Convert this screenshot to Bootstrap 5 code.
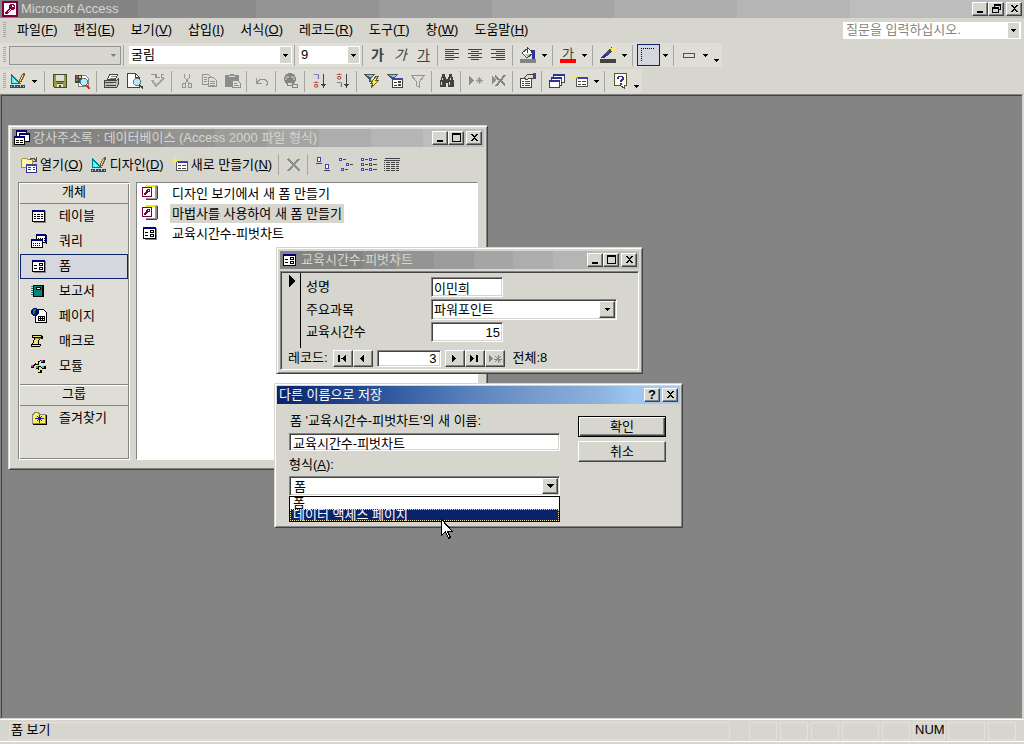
<!DOCTYPE html>
<html lang="ko">
<head>
<meta charset="utf-8">
<meta name="viewport" content="width=device-width, initial-scale=1">
<title>Microsoft Access</title>
<link rel="stylesheet" href="https://cdn.jsdelivr.net/npm/bootstrap@5.3.0/dist/css/bootstrap.min.css">
<style>
:root{--face:#d6d6ce;--lite:#deded6;--gray:#848484;--dark:#424242;--navy:#08246b}
body{font-family:"Liberation Sans","Noto Sans CJK KR",sans-serif;font-size:13px;line-height:16px;color:#000;background:var(--face)}
button,input,select{font:inherit;color:inherit;line-height:16px;border-radius:0}
svg{display:block;flex:none;shape-rendering:crispEdges}
.caption{height:18px;padding:0 2px;gap:3px;color:var(--face);background:linear-gradient(90deg,#848484 0 23%,#8c8c8c 0 32%,#949494 0 43%,#9c9c9c 0 54%,#a5a5a5 0 65%,#adadad 0 76%,#b5b5b5 0 87%,#bdbdbd 0);white-space:nowrap}
.app-caption{background:linear-gradient(90deg,#848484 0 138px,#8c8c8c 0 25%,#949494 0 37%,#9c9c9c 0 48%,#a5a5a5 0 60%,#adadad 0 72%,#b5b5b5 0 83%,#bdbdbd 0)}
.blue-caption{color:#fff;background:linear-gradient(90deg,#08246b 0,#21458c 18%,#3961a5 32%,#5a82bd 48%,#7b9ece 66%,#8cb2de 80%,#9cc7ef 88%,#a5cbf7)}
.bevel{color:#000;background:var(--face);border:1px solid;border-color:#fff var(--dark) var(--dark) #fff;box-shadow:inset -1px -1px var(--gray);padding:0}
.ctl{width:16px;height:14px;display:flex;align-items:center;justify-content:center}
.ctls .ctl:last-child{margin-left:2px}
.sunken{background:#fff;border:1px solid;border-color:var(--gray) #fff #fff var(--gray);box-shadow:inset 1px 1px var(--dark),inset -1px -1px var(--face)}
.win{position:absolute;background:var(--face);border:1px solid;border-color:var(--face) var(--dark) var(--dark) var(--face);box-shadow:inset 1px 1px #fff,inset -1px -1px var(--gray)}
.menubar{height:24px}
.menubar nav{padding-left:3px}
.menubar a{color:#000;text-decoration:none;padding:0 8px;white-space:nowrap}
.grip{width:3px;height:16px;margin:0 3px 0 3px;background:repeating-linear-gradient(180deg,#a5a5a5 0 1px,transparent 1px 2px)}
.toolband{height:24px;background:var(--lite);border-radius:0 2px 2px 0;width:max-content;margin-top:1px}
.toolband + .toolband{margin-top:2px}
.tb{width:23px;height:22px;border:0;background:none;padding:0 3px 0 4px;display:flex;align-items:center}
.drop{width:11px;height:22px;border:0;background:none;padding:0;display:flex;align-items:center;justify-content:center}
.sep{width:1px;height:21px;background:#a5a5a5;margin:0 3px 0 2px}
.tb.glyph{font-size:14px;color:var(--dark);padding:0;justify-content:center}
.tb.pressed{border:1px solid var(--navy);background:#d6d6de;padding:0 0 0 2px;margin-left:1px}
.combo{position:relative}
.combo select{appearance:none;width:100%;height:100%;border:0;background:#fff;padding:0 2px;outline:0}
.combo .arrow{position:absolute;top:1px;right:1px;bottom:1px;width:11px;background:var(--face);display:flex;align-items:center;justify-content:center;pointer-events:none}
.combo.off{width:112px;height:19px;border:1px solid #949494}
.combo.off select{background:var(--face);opacity:1}
.combo.face{width:163px;height:18px;margin-left:2px}
.combo.size{width:61px;height:18px;margin-left:1px}
.combo.big{padding:2px 1px 1px 2px}
.combo.big .arrow{width:16px;background:var(--face)}
.ask{width:178px;height:17px;background:#fff;margin-right:3px}
.ask input{border:0;background:#fff;width:165px;padding:0 3px;outline:0}
.ask input::placeholder{color:var(--gray);opacity:1}
.ask button{border:0;background:var(--face);width:11px;height:15px;padding:0 0 0 3px}
.mdi{background:var(--gray);border:1px solid var(--gray);border-right:1px solid var(--face);border-bottom:1px solid var(--face);box-shadow:inset 1px 1px var(--dark);margin:1px 1px 0 0;min-height:500px}
.dbwin{left:7px;top:30px;width:480px;padding:3px 3px 9px}
.formwin{left:275px;top:152px;width:367px;padding:3px 3px 3px}
.savewin{left:273px;top:288px;width:409px;height:145px;padding:2px}
.pointer{left:440px;top:424px;position:absolute;z-index:3}
.dbtools{height:35px;padding-left:9px}
.dbtools .txtbtn{border:0;background:none;padding:0 8px 0 0;display:flex;align-items:center;gap:3px;white-space:nowrap}
.panes{padding:0 6px;gap:6px}
.side{width:112px;background:var(--lite);border:1px solid;border-color:var(--gray) #fff #fff var(--gray);box-shadow:inset 1px 1px #fff,inset -1px -1px var(--gray);padding:1px;height:278px}
.side h2{font-size:13px;line-height:16px;font-weight:400;text-align:center;margin:0;height:20px;border-bottom:1px solid var(--gray)}
.side h2.second{border-top:1px solid var(--gray);box-shadow:inset 0 1px #fff;margin-top:5px;height:22px;padding-top:1px}
.side button{display:flex;align-items:center;width:100%;height:25px;border:1px solid transparent;background:none;padding:0 0 2px 10px;gap:12px}
.side button.current{border-color:var(--navy);background:#d6d6de}
.files{background:#fff;border:1px solid;border-color:var(--gray) #fff #fff var(--gray);padding:0 0 0 5px}
.files li{height:20px;display:flex;align-items:center;gap:12px;white-space:nowrap}
.files a{color:#000;text-decoration:none;padding:2px 2px 1px}
.files .chosen{background:var(--face)}
.formbody{border:1px solid;border-color:var(--gray) #fff #fff var(--gray);box-shadow:inset 1px 1px var(--dark);margin-top:2px;padding:1px}
.selector{width:19px;border-right:1px solid #000;padding:2px 0 0 7px}
.fields{padding:4px 0 6px 5px;gap:2px}
.fieldrow{display:grid;grid-template-columns:125px 1fr;align-items:center}
.fieldrow input{height:20px;width:72px;padding:0 2px}
.fieldrow .combo{width:186px;height:21px}
.fieldrow select{padding:0}
.navrow{height:20px;padding-left:6px;white-space:nowrap}
.navrow label{margin-right:5px}
.navrow .bevel{width:20px;height:17px;display:flex;align-items:center;justify-content:center}
.navrow input{width:64px;height:17px;padding:0 3px;margin:0 4px}
.savegrid{display:grid;grid-template-columns:271px 88px;column-gap:18px;padding:9px 12px 0}
.savegrid label{padding-left:1px}
.savegrid input{height:18px;padding:0 3px;margin-top:4px}
.savegrid label + .combo{height:20px;margin-top:3px}
.savegrid .kind{padding:0;margin-top:6px}
.savegrid .ok{height:21px}
.savegrid .oks{padding-top:3px}
.savegrid .default{outline:1px solid #000;outline-offset:-1px;border-color:#000;box-shadow:inset 1px 1px #fff,inset -1px -1px var(--dark),inset -2px -2px var(--gray)}
.picklist{position:absolute;left:-1px;right:-1px;top:19px;border:1px solid #000;background:#fff;z-index:2}
.picklist li{height:12px;line-height:12px;padding:0 3px;overflow:hidden}
.picklist .hot{background:var(--navy);color:#fff;outline:1px dotted #f7dfa5;outline-offset:-1px}
.statusbar{border-top:1px solid #fff;border-bottom:1px solid #fff;padding:2px 8px 1px 9px;gap:3px;margin-bottom:2px}
.cell{height:18px;border:1px solid #e7dede;padding:0 1px;white-space:nowrap;width:28px}
.cell.message{width:auto;line-height:14px}
.cell.wide{width:37px}
.cell.num{width:32px;line-height:14px}
</style>
</head>
<body>
<svg width="0" height="0" class="position-absolute" aria-hidden="true">
<defs>
<symbol id="down" viewBox="0 0 5 3"><path d="M0 0h5v1h-1v1h-1v1h-1v-1h-1v-1h-1z"/></symbol>
<symbol id="min" viewBox="0 0 11 10"><path d="M2 7h6v2H2z"/></symbol>
<symbol id="max" viewBox="0 0 11 10"><path d="M1 0h9v9H1zM2 2v6h7V2z" fill-rule="evenodd"/></symbol>
<symbol id="close" viewBox="0 0 11 10"><path d="M2 1h2v1h1v1h1v-1h1v-1h2v1h-1v1h-1v1h-1v1h1v1h1v1h1v1h-2v-1h-1v-1h-1v1h-1v1h-2v-1h1v-1h1v-1h1v-1h-1v-1h-1v-1h-1z"/></symbol>
<symbol id="restore" viewBox="0 0 11 10"><path d="M3 0h7v6H8v3H1V3h2zM4 2v1h4v2h1V2zM2 5v3h5V5z" fill-rule="evenodd"/></symbol>
<symbol id="access" viewBox="0 0 16 16"><path fill="#7b0039" d="M0 0h16v16H0z"/><path fill="#fff" d="M2 2h12v12H2z"/><path fill="#840042" d="M8 3h4v1h1v4h-1v1H9v1H8v1H7v1H6v1H3v-2h1v-1h1V9h1V8h1V4h1z"/><path fill="#fff" d="M10 4h1v1h1v1h-2zM8 8h1v1H8v1H7v1H6v-1h1V9h1z"/></symbol>
<symbol id="dsn" viewBox="0 0 16 16"><path d="M1 1h1v1h1v1h1v1h1v1h1v1h1v1h1v1h1v1h1v1h1v1H1z" fill="#007b84"/><path d="M2 4l6 6H2z" fill="#4ff"/><path d="M4 7v2h2z" fill="#fff"/><path d="M0 12h15v3H0z" fill="#394a5a"/><path d="M1 13h1v1H1zM4 12h1v2H4zM7 13h1v1H7zM10 12h1v2h-1zM13 13h1v1h-1z" fill="#a5dede"/><path d="M13 0h2v3h-1v2h-1v2h-1v2h-2v1H8V8h1V6h1V4h1V2h1V1h1z" fill="#7b5a39"/><path d="M12 2h1v2h-1v2h-1v2h-1V6h1V4h1z" fill="#ffe74a"/></symbol>
<symbol id="save" viewBox="0 0 16 16"><path d="M1 1h14v14H2v-1H1z" fill="#424a31"/><path d="M2 2h2v7h8V2h2v12h-3v-4H5v4H2z" fill="#949c42"/><path d="M4 2h8v6H4z" fill="#deded6"/><path d="M5 11h6v3H9v-2H7v2H5z" fill="#e7e7de"/></symbol>
<symbol id="seek" viewBox="0 0 16 16"><path d="M3.500 2.500h7l3 3v8h-10z" fill="#fff" stroke="#848484"/><path d="M0 2h7v8H0z" fill="#424242"/><path d="M1 3h2v2H1z" fill="#e33"/><path d="M4 3h2v2H4z" fill="#fc4"/><path d="M1 6h2v2H1z" fill="#4a4"/><path d="M4 6h2v2H4z" fill="#44d"/><circle cx="9" cy="9" r="3.500" fill="#aef" stroke="#427b84"/><path d="M11 12l4 4" stroke="#c33" stroke-width="2"/></symbol>
<symbol id="print" viewBox="0 0 16 16"><path d="M5.500 1.500h8l-2 5h-8z" fill="#fff" stroke="#424242"/><path d="M7 3.500h5M6 5.500h5" stroke="#848484"/><path d="M.500 7.500h12l2-2v6l-2 3H.500z" fill="#bdbdb5" stroke="#424242"/><path d="M1 9.500h11M2 12.500h10" stroke="#424242"/><path d="M9 10h2v1H9z" fill="#ee4"/></symbol>
<symbol id="preview" viewBox="0 0 16 16"><path d="M.500.500h8l4 4v10H.500z" fill="#fff" stroke="#424242"/><path d="M8.500.500v4h4" fill="none" stroke="#424242"/><circle cx="10" cy="9" r="3.500" fill="#bde7ef" stroke="#637b84"/><path d="M12 12l4 3" stroke="#424242" stroke-width="2"/></symbol>
<symbol id="check" viewBox="0 0 16 16"><path d="M1 1.500h4v3M6.500 1v3.500h3M14 1.500h-3v3h3" fill="none" stroke="#949494"/><path d="M2 7l4 6 8-8" fill="none" stroke="#a5a5a5" stroke-width="2"/></symbol>
<symbol id="cut" viewBox="0 0 16 16"><g fill="none" stroke="#949494"><path d="M5.500 1v3l4 6M10.500 1v3l-4 6"/><path d="M3.500 10.500h3v4h-3zM9.500 10.500h3v4h-3z"/></g></symbol>
<symbol id="copy" viewBox="0 0 16 16"><g fill="#deded6" stroke="#949494"><path d="M.500 1.500h6l3 3v7h-9z"/><path d="M6.500 4.500h5l3 3v6h-8z"/><path d="M2 4.500h3M2 6.500h3M2 8.500h3M8 8.500h5M8 10.500h5M8 12.500h5"/></g></symbol>
<symbol id="paste" viewBox="0 0 16 16"><path d="M0 2h5V1h4v1h5v12H0z" fill="#8c8c8c"/><path d="M4 3h6v1H4z" fill="#deded6"/><path d="M7.500 7.500h5l3 3v4h-8z" fill="#deded6" stroke="#8c8c8c"/><path d="M9 10.500h3M9 12.500h5" stroke="#949494"/></symbol>
<symbol id="undo" viewBox="0 0 16 16"><path d="M2.500 5v5h5M3 9.500l3-3h5l2 2v3l-1 1" fill="none" stroke="#949494"/></symbol>
<symbol id="web" viewBox="0 0 16 16"><circle cx="7" cy="6" r="6" fill="#848484"/><path d="M3 3h3v2H4v2H2V5h1zM8 3h3v1h1v3h-2V5H8z" fill="#adadad"/><path d="M4.500 9.500h5v3h-5zM9.500 11.500h5v3h-5z" fill="#deded6" stroke="#848484"/></symbol>
<symbol id="arrdown" viewBox="0 0 16 16"><path d="M11 1h1v10h2v1h-1v1h-1v2h-1v-2h-1v-1H9v-1h2z" fill="#424242"/></symbol>
<symbol id="funnel" viewBox="0 0 16 16"><path d="M0 1h11v1h-1v1H9v1H8v1H7v4H5V6H4V5H3V4H2V3H1V2H0z" fill="#4a5a63"/><path d="M3 2h6v1H8v1H5V3H3z" fill="#8cc6ce"/></symbol>
<symbol id="fsel" viewBox="0 0 16 16"><use href="#funnel"/><path d="M12 3h3l-3 4h3l-8 8 2-5H7z" fill="#ffef42" stroke="#635a21"/></symbol>
<symbol id="fform" viewBox="0 0 16 16"><use href="#funnel"/><path d="M5.500 5.500h10v9h-10z" fill="#fff" stroke="#424242"/><path d="M5 5h11v2H5z" fill="#4242a5"/><path d="M7 9.500h3M7 12.500h3" stroke="#424242"/><path d="M11.500 8.500h2v1h-2zM11.500 11.500h2v1h-2z" stroke="#424242"/></symbol>
<symbol id="fgray" viewBox="0 0 16 16"><path d="M1.500 2.500h13l-5 6v6l-3-2v-4z" fill="none" stroke="#949494"/></symbol>
<symbol id="find" viewBox="0 0 16 16"><path d="M3 1h3v3h1v2h2V4h1V1h3v3h1v3h1v7H9v-4H7v4H1V7h1V4h1z" fill="#424242"/><path d="M3 5h1v2H3zM11 5h1v2h-1zM2 9h1v3H2zM10 9h1v3h-1z" fill="#deded6"/></symbol>
<symbol id="newrec" viewBox="0 0 16 16"><path d="M1 3v9l5-4.500z" fill="#8c8c8c"/><path d="M11.500 4v7M8 7.500h7M9 5l5 5M14 5l-5 5" stroke="#949494"/></symbol>
<symbol id="delrec" viewBox="0 0 16 16"><path d="M1 3v8l4-4z" fill="#8c8c8c"/><path d="M4 3l10 9M14 2L5 13" stroke="#848484" stroke-width="2"/></symbol>
<symbol id="props" viewBox="0 0 16 16"><path d="M.500 5.500h11v9H.500z" fill="#fff" stroke="#424242"/><path d="M2 8.500h2M5 8.500h5M2 10.500h2M5 10.500h5M2 12.500h2M5 12.500h5" stroke="#424242"/><path d="M4 5l4-4h5v4H9l-2 2z" fill="#e7d6c6" stroke="#424242"/><path d="M13 0h3v6h-3z" fill="#4242a5"/></symbol>
<symbol id="dbw" viewBox="0 0 16 16"><g fill="#fff" stroke="#424242"><path d="M4.500 1.500h11v8h-11z"/><path d="M2.500 4.500h10v8h-10z"/><path d="M.500 7.500h10v7H.500z"/></g><path d="M4 1h12v2H4zM2 4h11v2H2zM0 7h11v2H0z" fill="#31319c"/></symbol>
<symbol id="dbi" viewBox="0 0 16 16"><g fill="#fff" stroke="#000"><path d="M2.500.500h10v8h-10z"/><path d="M5.500 3.500h10v8h-10z"/><path d="M.500 6.500h10v8H.500z"/></g><path d="M2 0h11v2H2zM5 3h11v2H5zM0 6h11v2H0z" fill="#00007b"/><path d="M2 10.500h3M6 10.500h3M2 12.500h3M6 12.500h3" stroke="#000"/></symbol>
<symbol id="newobj" viewBox="0 0 16 16"><path d="M4.500 4.500h11v9h-11z" fill="#fff" stroke="#525252"/><path d="M4 4h12v2H4z" fill="#4242a5"/><path d="M6 8.500h3M10 8.500h4M6 11.500h3M10 11.500h4" stroke="#424242"/><path d="M3.500 0v8M0 3.500h8M1 1l6 6M7 0L0 7" stroke="#f7ef52"/></symbol>
<symbol id="help" viewBox="0 0 16 16"><path d="M2.500.500h12v12h-2v3l-4-3h-6z" fill="#ffffce" stroke="#525252"/><path d="M6 3h5v1h1v3h-1v1h-1v1H8V7h1V6h1V4H7v2H5V4h1zM8 10h2v2H8z" fill="#31319c"/></symbol>
<symbol id="al" viewBox="0 0 16 16"><path d="M0 2.500h14M0 4.500h9M0 6.500h14M0 8.500h9M0 10.500h14M0 12.500h9" stroke="#424242"/></symbol>
<symbol id="ac" viewBox="0 0 16 16"><path d="M0 2.500h14M3 4.500h8M0 6.500h14M3 8.500h8M0 10.500h14M3 12.500h8" stroke="#424242"/></symbol>
<symbol id="ar" viewBox="0 0 16 16"><path d="M0 2.500h14M5 4.500h9M0 6.500h14M5 8.500h9M0 10.500h14M5 12.500h9" stroke="#424242"/></symbol>
<symbol id="fill" viewBox="0 0 16 16"><path d="M0 12h16v4H0z" fill="#848484"/><path d="M2 6l6-5 5 5-6 5z" fill="#fff" stroke="#424242"/><path d="M4 7h7l-4 3z" fill="#9cc"/><path d="M7.500 0v6M11 3h3v8h-2V6z" stroke="#31319c" fill="#31319c"/></symbol>
<symbol id="brush" viewBox="0 0 16 16"><path d="M0 12h16v4H0z" fill="#424242"/><path d="M0 11l5-5h3v2l-4 3z" fill="#31319c"/><path d="M6 8l7-7" stroke="#424a7b" stroke-width="3"/><path d="M11 3l4-3" stroke="#ffef42" stroke-width="3"/></symbol>
<symbol id="tbl" viewBox="0 0 16 16"><path d="M3 3h12v12H3z" fill="#848484"/><path d="M1.500 2.500h12v11h-12z" fill="#fff" stroke="#000"/><path d="M1 2h13v2H1z" fill="#00007b"/><path d="M3 6.500h2M6 6.500h3M10 6.500h2M3 8.500h2M6 8.500h3M10 8.500h2M3 10.500h2M6 10.500h3M10 10.500h2" stroke="#000"/></symbol>
<symbol id="qry" viewBox="0 0 16 16"><path d="M5.500 1.500h9v8h-9z" fill="#fff" stroke="#000"/><path d="M5 1h10v2H5zM15 2h1v9h-1z" fill="#00007b"/><path d="M7 5.500h7M7 7.500h7" stroke="#000" stroke-dasharray="1"/><path d="M.500 6.500h11v8H.500z" fill="#fff" stroke="#000"/><path d="M0 6h12v2H0z" fill="#00007b"/><path d="M2 10.500h8M2 12.500h8" stroke="#000" stroke-dasharray="1"/></symbol>
<symbol id="frm" viewBox="0 0 16 16"><path d="M3 3h12v12H3z" fill="#848484"/><path d="M1.500 2.500h12v11h-12z" fill="#fff" stroke="#000"/><path d="M1 2h13v2H1z" fill="#00007b"/><path d="M3 7.500h3M3 10.500h3" stroke="#000"/><path d="M8.500 5.500h3v2h-3zM8.500 9.500h3v2h-3z" fill="none" stroke="#000"/></symbol>
<symbol id="rpt" viewBox="0 0 16 16"><path d="M2 2h11v12H2z" fill="#000"/><path d="M3 3h8v10H3z" fill="#00847b"/><path d="M5 4h5v3H5z" fill="#000"/><path d="M6 5h3v1H6z" fill="#fff"/><path d="M0 3.500h2M0 5.500h2M0 7.500h2M0 9.500h2M0 11.500h2" stroke="#397b73"/></symbol>
<symbol id="pag" viewBox="0 0 16 16"><path d="M4.500 1.500h8l3 3v10h-11z" fill="#fff" stroke="#000"/><path d="M7 8h7v5H7z" fill="#000"/><path d="M8 9h1v1H8zM10 9h1v1h-1zM12 9h1v1h-1zM8 11h1v1H8zM10 11h1v1h-1zM12 11h1v1h-1z" fill="#fff"/><circle cx="4" cy="4" r="4" fill="#00107b"/><path d="M2 1h3v2H4v3H2z" fill="#1a8c1a"/></symbol>
<symbol id="mac" viewBox="0 0 16 16"><path d="M1 2h10v1h1v3H9v1H8v4h2v2H9v1H0v-3h1v-1h1V7h1V5H1z" fill="#000"/><path d="M2 3h8v1H2zM4 6h4v1H7v4H2v-1h1V7h1zM1 12h8v1H1z" fill="#f7e752"/><path d="M4 5h6v1H4z" fill="#848484"/></symbol>
<symbol id="mod" viewBox="0 0 16 16"><path d="M1 9l6-5M8 12l-3-3M7 4l4-2M8 8l5 3" stroke="#000"/><path d="M0 7h3v3H0zM5 4h3v3H5zM10 2h4v3h-4zM5 8h3v3H5zM11 8h4v3h-4zM7 12h4v3H7z" fill="#000"/><path d="M0 7h2v2H0zM10 2h2v2h-2z" fill="#c3c"/><path d="M5 4h2v2H5zM7 12h2v2H7z" fill="#ee4"/><path d="M5 8h2v2H5z" fill="#3b3"/><path d="M11 8h2v2h-2z" fill="#3cc"/></symbol>
<symbol id="fav" viewBox="0 0 16 16"><path d="M2 5h14v10H2z" fill="#000"/><path d="M1.500 4.500h1l1-2h4l1 2h6v9h-13z" fill="#ffef5a" stroke="#848484"/><path d="M8.500 5v8M4 8.500h9M6 6l5 5M11 6l-5 5" stroke="#1018e7"/></symbol>
<symbol id="wiz" viewBox="0 0 16 16"><path d="M4 0h11v14H4z" fill="#949494"/><path d="M3 2h10v11H3z" fill="#fff"/><path d="M4 0h10v1h-1v1H3V1h1z" fill="#ee0"/><path d="M15 1h1v13h-1zM4 14h11v1H4z" fill="#424242"/><path d="M.500 2.500h9v9h-9z" fill="#fff" stroke="#7b0042"/><path d="M5 4h3v3H6v1H5v1H4v1H2V8h1V7h1V5h1z" fill="#7b0042"/><path d="M6 5h1v1H6z" fill="#fff"/></symbol>
<symbol id="opn" viewBox="0 0 16 16"><path d="M.500 2.500l1-1h4l1 1h5v8H.500z" fill="#fff7a5" stroke="#9c9442"/><path d="M9 2.500l1-1h3l2 2M15.500 0v4.500H12" fill="none" stroke="#525252"/><path d="M5.500 7.500h10v8h-10z" fill="#fff" stroke="#31319c"/><path d="M5 7h11v2H5z" fill="#4242a5"/><path d="M7 10.500h3M7 12.500h3M12 10.500h2M12 12.500h2" stroke="#424242"/></symbol>
<symbol id="x" viewBox="0 0 16 16"><path d="M2 2l12 12M13 2L2 14" stroke="#8c8c8c" stroke-width="2" fill="none"/></symbol>
<symbol id="big" viewBox="0 0 16 16"><path d="M2.500.500h3v4h-3zM10.500 7.500h3v4h-3z" fill="#fff" stroke="#4242b5"/><path d="M1 6.500h6M9 13.500h6" stroke="#424242"/></symbol>
<symbol id="sml" viewBox="0 0 16 16"><path d="M1.500 1.500h2v2h-2zM8.500 6.500h2v2h-2zM3.500 11.500h2v2h-2z" fill="#fff" stroke="#4242b5"/><path d="M5 2.500h3M12 7.500h3M7 12.500h3" stroke="#424242"/></symbol>
<symbol id="lst" viewBox="0 0 16 16"><path d="M.500 1.500h2v2h-2zM.500 6.500h2v2h-2zM.500 11.500h2v2h-2zM8.500 1.500h2v2h-2zM8.500 6.500h2v2h-2zM8.500 11.500h2v2h-2z" fill="#fff" stroke="#4242b5"/><path d="M4 2.500h3M4 7.500h3M4 12.500h3M12 2.500h4M12 7.500h4M12 12.500h4" stroke="#424242"/></symbol>
<symbol id="dtl" viewBox="0 0 16 16"><path d="M1 1.500h15M0 3.500h16" stroke="#424242"/><path d="M0 5.500h1M2 5.500h4M7 5.500h4M12 5.500h3M0 7.500h1M2 7.500h4M7 7.500h4M12 7.500h3M0 9.500h1M2 9.500h4M7 9.500h4M12 9.500h3M0 11.500h1M2 11.500h4M7 11.500h4M12 11.500h3M0 13.500h1M2 13.500h4M7 13.500h4M12 13.500h3" stroke="#424242"/></symbol>
</defs>
</svg>

<div class="d-flex flex-column min-vh-100">
<header>
  <div class="caption app-caption d-flex align-items-center">
    <svg width="16" height="16"><use href="#access"/></svg>
    <span>Microsoft Access</span>
    <div class="ctls d-flex ms-auto">
      <button class="bevel ctl" aria-label="최소화"><svg width="11" height="10"><use href="#min"/></svg></button>
      <button class="bevel ctl" aria-label="이전 크기로"><svg width="11" height="10"><use href="#restore"/></svg></button>
      <button class="bevel ctl" aria-label="닫기"><svg width="11" height="10"><use href="#close"/></svg></button>
    </div>
  </div>
  <div class="menubar d-flex align-items-center">
    <span class="grip me-0"></span>
    <nav class="d-flex">
      <a href="#">파일(<u>F</u>)</a><a href="#">편집(<u>E</u>)</a><a href="#">보기(<u>V</u>)</a><a href="#">삽입(<u>I</u>)</a><a href="#">서식(<u>O</u>)</a><a href="#">레코드(<u>R</u>)</a><a href="#">도구(<u>T</u>)</a><a href="#">창(<u>W</u>)</a><a href="#">도움말(<u>H</u>)</a>
    </nav>
    <div class="ask d-flex align-items-center ms-auto">
      <input type="text" placeholder="질문을 입력하십시오." aria-label="질문"><button aria-label="질문 목록"><svg width="5" height="3"><use href="#down"/></svg></button>
    </div>
  </div>
  <div class="toolband d-flex align-items-center">
    <span class="grip"></span>
    <div class="combo off"><select disabled aria-label="개체"><option></option></select><span class="arrow bg-transparent"><svg width="5" height="3" fill="#848484"><use href="#down"/></svg></span></div>
    <span class="sep"></span>
    <div class="combo face"><select aria-label="글꼴"><option>굴림</option></select><span class="arrow"><svg width="5" height="3"><use href="#down"/></svg></span></div>
    <span class="sep"></span>
    <div class="combo size"><select aria-label="글꼴 크기"><option>9</option></select><span class="arrow"><svg width="5" height="3"><use href="#down"/></svg></span></div>
    <span class="sep"></span>
    <button class="tb glyph fw-bold">가</button><button class="tb glyph fst-italic">가</button><button class="tb glyph"><u>가</u></button>
    <span class="sep"></span>
    <button class="tb" aria-label="왼쪽 맞춤"><svg width="16" height="16"><use href="#al"/></svg></button>
    <button class="tb" aria-label="가운데 맞춤"><svg width="16" height="16"><use href="#ac"/></svg></button>
    <button class="tb" aria-label="오른쪽 맞춤"><svg width="16" height="16"><use href="#ar"/></svg></button>
    <span class="sep"></span>
    <button class="tb" aria-label="채우기 색"><svg width="16" height="16"><use href="#fill"/></svg></button><button class="drop" aria-label="채우기 색 목록"><svg width="5" height="3"><use href="#down"/></svg></button>
    <span class="sep"></span>
    <button class="tb" aria-label="글꼴 색"><svg width="16" height="16"><text x="2" y="11" font-size="13" fill="#424242">가</text><path d="M0 12h16v4H0z" fill="#f00"/></svg></button><button class="drop" aria-label="글꼴 색 목록"><svg width="5" height="3"><use href="#down"/></svg></button>
    <span class="sep"></span>
    <button class="tb" aria-label="선 색"><svg width="16" height="16"><use href="#brush"/></svg></button><button class="drop" aria-label="선 색 목록"><svg width="5" height="3"><use href="#down"/></svg></button>
    <span class="sep"></span>
    <button class="tb pressed" aria-label="선 두께"><svg width="16" height="16"><path d="M1 1.500h14M1.500 1v14" stroke="#000" stroke-dasharray="1"/></svg></button><button class="drop" aria-label="선 두께 목록"><svg width="5" height="3"><use href="#down"/></svg></button>
    <span class="sep"></span>
    <button class="tb" aria-label="특수 효과"><svg width="16" height="16"><path d="M2.500 6.500h11v4h-11z" fill="none" stroke="#525252"/></svg></button><button class="drop" aria-label="특수 효과 목록"><svg width="5" height="3"><use href="#down"/></svg></button>
    <button class="drop align-items-end pb-1" aria-label="도구 모음 옵션"><svg width="5" height="3"><use href="#down"/></svg></button>
  </div>
  <div class="toolband d-flex align-items-center">
    <span class="grip me-0"></span>
    <button class="tb" aria-label="보기"><svg width="16" height="16"><use href="#dsn"/></svg></button><button class="drop" aria-label="보기 목록"><svg width="5" height="3"><use href="#down"/></svg></button>
    <span class="sep ms-1"></span>
    <button class="tb" aria-label="저장"><svg width="16" height="16"><use href="#save"/></svg></button>
    <button class="tb" aria-label="검색"><svg width="16" height="16"><use href="#seek"/></svg></button>
    <span class="sep"></span>
    <button class="tb" aria-label="인쇄"><svg width="16" height="16"><use href="#print"/></svg></button>
    <button class="tb" aria-label="미리 보기"><svg width="16" height="16"><use href="#preview"/></svg></button>
    <button class="tb" aria-label="맞춤법"><svg width="16" height="16"><use href="#check"/></svg></button>
    <span class="sep"></span>
    <button class="tb" aria-label="잘라내기"><svg width="16" height="16"><use href="#cut"/></svg></button>
    <button class="tb" aria-label="복사"><svg width="16" height="16"><use href="#copy"/></svg></button>
    <button class="tb" aria-label="붙여넣기"><svg width="16" height="16"><use href="#paste"/></svg></button>
    <span class="sep"></span>
    <button class="tb" aria-label="실행 취소"><svg width="16" height="16"><use href="#undo"/></svg></button>
    <span class="sep"></span>
    <button class="tb" aria-label="하이퍼링크"><svg width="16" height="16"><use href="#web"/></svg></button>
    <span class="sep"></span>
    <button class="tb" aria-label="오름차순"><svg width="16" height="16"><text x="0" y="7" font-size="9" fill="#31319c">ㄱ</text><text x="0" y="15" font-size="9" fill="#a52121">ㅎ</text><use href="#arrdown"/></svg></button>
    <button class="tb" aria-label="내림차순"><svg width="16" height="16"><text x="0" y="7" font-size="9" fill="#a52121">ㅎ</text><text x="0" y="15" font-size="9" fill="#31319c">ㄱ</text><use href="#arrdown"/></svg></button>
    <span class="sep"></span>
    <button class="tb" aria-label="선택 필터"><svg width="16" height="16"><use href="#fsel"/></svg></button>
    <button class="tb" aria-label="폼 필터"><svg width="16" height="16"><use href="#fform"/></svg></button>
    <button class="tb" aria-label="필터 적용"><svg width="16" height="16"><use href="#fgray"/></svg></button>
    <span class="sep"></span>
    <button class="tb" aria-label="찾기"><svg width="16" height="16"><use href="#find"/></svg></button>
    <span class="sep"></span>
    <button class="tb" aria-label="새 레코드"><svg width="16" height="16"><use href="#newrec"/></svg></button>
    <button class="tb" aria-label="레코드 삭제"><svg width="16" height="16"><use href="#delrec"/></svg></button>
    <span class="sep"></span>
    <button class="tb" aria-label="속성"><svg width="16" height="16"><use href="#props"/></svg></button>
    <span class="sep"></span>
    <button class="tb" aria-label="데이터베이스 창"><svg width="16" height="16"><use href="#dbw"/></svg></button>
    <button class="tb" aria-label="새 개체"><svg width="16" height="16"><use href="#newobj"/></svg></button><button class="drop" aria-label="새 개체 목록"><svg width="5" height="3"><use href="#down"/></svg></button>
    <span class="sep"></span>
    <button class="tb" aria-label="도움말"><svg width="16" height="16"><use href="#help"/></svg></button>
    <button class="drop align-items-end pb-1" aria-label="도구 모음 옵션"><svg width="5" height="3"><use href="#down"/></svg></button>
  </div>
</header>

<main class="mdi position-relative flex-grow-1">
  <section class="win dbwin">
    <div class="caption d-flex align-items-center">
      <svg width="16" height="16"><use href="#dbi"/></svg>
      <span>강사주소록 : 데이터베이스 (Access 2000 파일 형식)</span>
      <div class="ctls d-flex ms-auto">
        <button class="bevel ctl" aria-label="최소화"><svg width="11" height="10"><use href="#min"/></svg></button>
        <button class="bevel ctl" aria-label="최대화"><svg width="11" height="10"><use href="#max"/></svg></button>
        <button class="bevel ctl" aria-label="닫기"><svg width="11" height="10"><use href="#close"/></svg></button>
      </div>
    </div>
    <div class="dbtools d-flex align-items-center">
      <button class="txtbtn"><svg width="16" height="16"><use href="#opn"/></svg><span>열기(<u>O</u>)</span></button>
      <button class="txtbtn"><svg width="16" height="16"><use href="#dsn"/></svg><span>디자인(<u>D</u>)</span></button>
      <button class="txtbtn pe-1"><svg width="16" height="16"><use href="#newobj"/></svg><span>새로 만들기(<u>N</u>)</span></button>
      <span class="sep"></span>
      <button class="tb" aria-label="삭제"><svg width="16" height="16"><use href="#x"/></svg></button>
      <span class="sep"></span>
      <button class="tb" aria-label="큰 아이콘"><svg width="16" height="16"><use href="#big"/></svg></button>
      <button class="tb" aria-label="작은 아이콘"><svg width="16" height="16"><use href="#sml"/></svg></button>
      <button class="tb" aria-label="간단히"><svg width="16" height="16"><use href="#lst"/></svg></button>
      <button class="tb" aria-label="자세히"><svg width="16" height="16"><use href="#dtl"/></svg></button>
    </div>
    <div class="panes d-flex">
      <div class="side">
        <h2>개체</h2>
        <button><svg width="16" height="16"><use href="#tbl"/></svg>테이블</button>
        <button><svg width="16" height="16"><use href="#qry"/></svg>쿼리</button>
        <button class="current"><svg width="16" height="16"><use href="#frm"/></svg>폼</button>
        <button><svg width="16" height="16"><use href="#rpt"/></svg>보고서</button>
        <button><svg width="16" height="16"><use href="#pag"/></svg>페이지</button>
        <button><svg width="16" height="16"><use href="#mac"/></svg>매크로</button>
        <button><svg width="16" height="16"><use href="#mod"/></svg>모듈</button>
        <h2 class="second">그룹</h2>
        <button><svg width="16" height="16"><use href="#fav"/></svg>즐겨찾기</button>
      </div>
      <ul class="files list-unstyled flex-grow-1 m-0">
        <li><svg width="16" height="16"><use href="#wiz"/></svg><a href="#">디자인 보기에서 새 폼 만들기</a></li>
        <li><svg width="16" height="16"><use href="#wiz"/></svg><a href="#" class="chosen">마법사를 사용하여 새 폼 만들기</a></li>
        <li><svg width="16" height="16"><use href="#frm"/></svg><a href="#">교육시간수-피벗차트</a></li>
      </ul>
    </div>
  </section>

  <section class="win formwin">
    <div class="caption d-flex align-items-center">
      <svg width="16" height="16"><use href="#frm"/></svg>
      <span>교육시간수-피벗차트</span>
      <div class="ctls d-flex ms-auto">
        <button class="bevel ctl" aria-label="최소화"><svg width="11" height="10"><use href="#min"/></svg></button>
        <button class="bevel ctl" aria-label="최대화"><svg width="11" height="10"><use href="#max"/></svg></button>
        <button class="bevel ctl" aria-label="닫기"><svg width="11" height="10"><use href="#close"/></svg></button>
      </div>
    </div>
    <div class="formbody">
      <div class="d-flex">
        <div class="selector"><svg width="6" height="12"><path d="M0 0l6 6-6 6z"/></svg></div>
        <div class="fields flex-grow-1 d-grid">
          <div class="fieldrow"><label for="nm">성명</label><input id="nm" class="sunken" value="이민희"></div>
          <div class="fieldrow"><label for="sj">주요과목</label><div class="combo big sunken"><select id="sj"><option>파워포인트</option></select><span class="arrow bevel"><svg width="5" height="3"><use href="#down"/></svg></span></div></div>
          <div class="fieldrow"><label for="hr">교육시간수</label><input id="hr" class="sunken text-end" value="15"></div>
        </div>
      </div>
      <div class="navrow d-flex align-items-center">
        <label for="rec">레코드:</label>
        <button class="bevel" aria-label="처음"><svg width="9" height="7"><path d="M0 0h2v7H0zM8 0v7L3.500 3.500z"/></svg></button>
        <button class="bevel" aria-label="이전"><svg width="5" height="7"><path d="M4 0v7L0 3.500z"/></svg></button>
        <input id="rec" class="sunken text-end" value="3">
        <button class="bevel" aria-label="다음"><svg width="5" height="7"><path d="M0 0v7l4-3.500z"/></svg></button>
        <button class="bevel" aria-label="마지막"><svg width="9" height="7"><path d="M0 0v7l4.500-3.500zM6 0h2v7H6z"/></svg></button>
        <button class="bevel" aria-label="새 레코드"><svg width="14" height="9"><path d="M1 1v7l4-3.500z" fill="#848484"/><path d="M10 1v8M6 5h8M7 2l6 6M13 2L7 8" stroke="#848484"/></svg></button>
        <span class="ms-2">전체:8</span>
      </div>
    </div>
  </section>

  <section class="win savewin">
    <div class="caption blue-caption d-flex align-items-center">
      <span>다른 이름으로 저장</span>
      <div class="ctls d-flex ms-auto">
        <button class="bevel ctl fw-bold" aria-label="도움말">?</button>
        <button class="bevel ctl" aria-label="닫기"><svg width="11" height="10"><use href="#close"/></svg></button>
      </div>
    </div>
    <div class="savegrid">
      <div class="d-flex flex-column">
        <label for="newname">폼 '교육시간수-피벗차트'의 새 이름:</label>
        <input id="newname" class="sunken" value="교육시간수-피벗차트">
        <label for="kind" class="kind">형식(<u>A</u>):</label>
        <div class="combo big sunken">
          <select id="kind"><option>폼</option><option>데이터 액세스 페이지</option></select><span class="arrow bevel"><svg width="7" height="4"><path d="M0 0h7v1H6v1H5v1H4v1H3V3H2V2H1V1H0z"/></svg></span>
          <ul class="picklist list-unstyled m-0" role="listbox"><li role="option">폼</li><li role="option" class="hot">데이터 액세스 페이지</li></ul>
        </div>
      </div>
      <div class="oks d-flex flex-column gap-1">
        <button class="bevel ok default">확인</button>
        <button class="bevel ok">취소</button>
      </div>
    </div>
  </section>
  <svg class="pointer" width="12" height="20"><path d="M.500.500v16l4-4 3 7 2-1-3-6h5z" fill="#fff" stroke="#000"/></svg>
</main>

<footer class="statusbar d-flex">
  <div class="cell message flex-grow-1 me-3">폼 보기</div>
  <div class="cell"></div><div class="cell"></div><div class="cell"></div><div class="cell wide"></div><div class="cell"></div><div class="cell num">NUM</div><div class="cell wide"></div><div class="cell"></div>
</footer>
</div>
<script src="https://cdn.jsdelivr.net/npm/bootstrap@5.3.0/dist/js/bootstrap.bundle.min.js"></script>
</body>
</html>
